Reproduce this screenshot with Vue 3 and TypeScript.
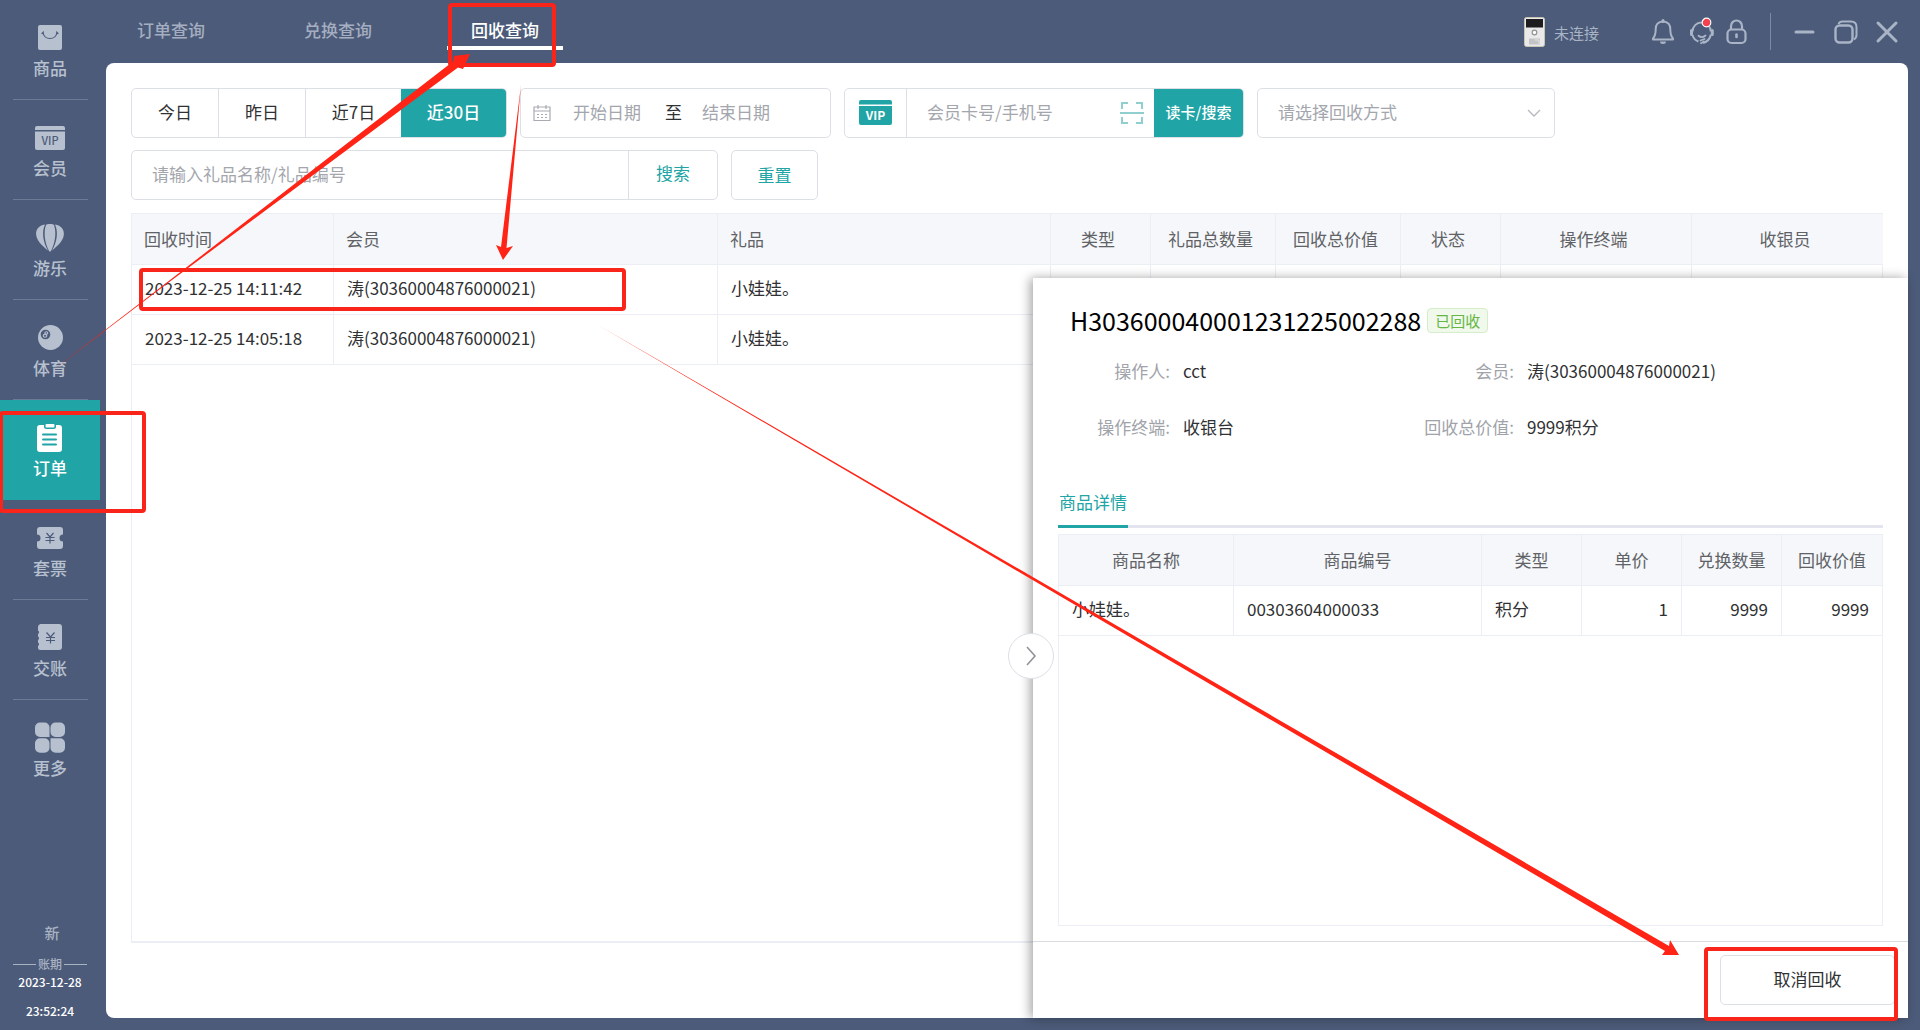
<script setup lang="ts">
import { ref } from 'vue'

interface NavItem { key: string; label: string }
interface Column { label: string; width: number; align?: 'left' | 'center' }

const navItems: NavItem[] = [
  { key: 'goods', label: '商品' },
  { key: 'member', label: '会员' },
  { key: 'play', label: '游乐' },
  { key: 'sport', label: '体育' },
  { key: 'order', label: '订单' },
  { key: 'ticket', label: '套票' },
  { key: 'account', label: '交账' },
  { key: 'more', label: '更多' },
]
const activeNav = ref('order')

const tabs = ['订单查询', '兑换查询', '回收查询']
const activeTab = ref('回收查询')

const ranges = ['今日', '昨日', '近7日', '近30日']
const activeRange = ref('近30日')

const columns: Column[] = [
  { label: '回收时间', width: 202, align: 'left' },
  { label: '会员', width: 384, align: 'left' },
  { label: '礼品', width: 333, align: 'left' },
  { label: '类型', width: 100 },
  { label: '礼品总数量', width: 125 },
  { label: '回收总价值', width: 125 },
  { label: '状态', width: 100 },
  { label: '操作终端', width: 191 },
  { label: '收银员', width: 191 },
]
const rows = [
  ['2023-12-25 14:11:42', '涛(30360004876000021)', '小娃娃。', '', '', '', '', '', ''],
  ['2023-12-25 14:05:18', '涛(30360004876000021)', '小娃娃。', '', '', '', '', '', ''],
]

const detailColumns: Column[] = [
  { label: '商品名称', width: 175 },
  { label: '商品编号', width: 248 },
  { label: '类型', width: 100 },
  { label: '单价', width: 100 },
  { label: '兑换数量', width: 100 },
  { label: '回收价值', width: 100 },
]
const detailRow = ['小娃娃。', '00303604000033', '积分', '1', '9999', '9999']
</script>

<template>
  <div class="app">
    <aside class="sidebar">
      <nav class="nav">
        <a
          v-for="item in navItems"
          :key="item.key"
          href="#"
          class="nav-item"
          :class="{ active: item.key === activeNav }"
          @click.prevent="activeNav = item.key"
        >
          <svg class="nav-icon" viewBox="0 0 32 32" aria-hidden="true">
            <template v-if="item.key === 'goods'">
              <rect x="4" y="3" width="24" height="25" rx="2" fill="currentColor" />
              <path d="M9 10.500q1 6 7 6t7-6M8 11.500l1.500-1.500M24 11.500l-1.500-1.500" fill="none" stroke="#4c5b79" stroke-width="1.200" stroke-linecap="round" />
            </template>
            <template v-else-if="item.key === 'member'">
              <path d="M1 6a2 2 0 0 1 2-2h26a2 2 0 0 1 2 2v2H1zM1 9.500h30V26a2 2 0 0 1-2 2H3a2 2 0 0 1-2-2z" fill="currentColor" />
              <text x="16" y="22.500" text-anchor="middle" font-size="11" font-weight="500" fill="#4c5b79">VIP</text>
            </template>
            <template v-else-if="item.key === 'play'">
              <path d="M11 2.500C4.500 3.500 1.500 8 2.200 13 3 19 8 23.500 14 28.500 9 20 7.500 10 11 2.500zM21 2.500c6.500 1 9.500 5.500 8.800 10.500C29 19 24 23.500 18 28.500 23 20 24.500 10 21 2.500zM16 2c-2 0-3.500.2-4 1-2.500 7-1.500 17 3 26q1 1.200 2 0c4.500-9 5.500-19 3-26-.5-.8-2-1-4-1z" fill="currentColor" />
            </template>
            <template v-else-if="item.key === 'sport'">
              <circle cx="16.500" cy="15.500" r="12.500" fill="currentColor" />
              <circle cx="11.500" cy="12.500" r="4.800" fill="#4c5b79" />
              <ellipse cx="12.300" cy="10.900" rx="1.500" ry="1.200" fill="none" stroke="#b7c0cf" stroke-width="1.100" />
              <ellipse cx="11" cy="13.800" rx="1.800" ry="1.400" fill="none" stroke="#b7c0cf" stroke-width="1.100" />
            </template>
            <template v-else-if="item.key === 'order'">
              <path d="M6 3h4v1.500Q10 7 12.500 7h7Q22 7 22 4.500V3h3a3 3 0 0 1 3 3v21a3 3 0 0 1-3 3H6a3 3 0 0 1-3-3V6a3 3 0 0 1 3-3z" fill="currentColor" />
              <rect x="11.500" y="2" width="9" height="3.500" rx="1" fill="currentColor" />
              <path d="M9 12.500h13M9 17.500h13M9 22.500h13" stroke="#20a4a5" stroke-width="2" stroke-linecap="round" />
            </template>
            <template v-else-if="item.key === 'ticket'">
              <path d="M6 5h20a3 3 0 0 1 3 3v4.500a3.500 3.500 0 0 0 0 7V24a3 3 0 0 1-3 3H6a3 3 0 0 1-3-3v-4.500a3.500 3.500 0 0 0 0-7V8a3 3 0 0 1 3-3z" fill="currentColor" />
              <path d="M12.500 11l3.500 4 3.500-4M11.500 15.500h9M11.500 18.500h9M16 15v6.500" fill="none" stroke="#4c5b79" stroke-width="1.200" />
            </template>
            <template v-else-if="item.key === 'account'">
              <path d="M6.500 2H25a3 3 0 0 1 3 3v20a3 3 0 0 1-3 3H6.500A2.500 2.500 0 0 1 4 25.500V24a2 2 0 0 0 0-3.500V18a2 2 0 0 0 0-3.500V12a2 2 0 0 0 0-3.500V5a3 3 0 0 1 2.500-3z" fill="currentColor" />
              <path d="M12.500 10.500l4 4.500 4-4.500M12 15.500h9M12 18.500h9M16.500 15v6.500" fill="none" stroke="#4c5b79" stroke-width="1.200" />
            </template>
            <template v-else>
              <path d="M6 .5h4.500a5 5 0 0 1 5 5V15H6a5 5 0 0 1-5-5V5.500a5 5 0 0 1 5-5z" fill="currentColor" />
              <path d="M21.500.5H26a5 5 0 0 1 5 5V10a5 5 0 0 1-5 5h-4.500a5 5 0 0 1-5-5V5.500a5 5 0 0 1 5-5z" fill="currentColor" />
              <path d="M6 16.200h4.500a5 5 0 0 1 5 5v4.500a5 5 0 0 1-5 5H6a5 5 0 0 1-5-5v-4.500a5 5 0 0 1 5-5z" fill="currentColor" />
              <path d="M16.500 16.200H26a5 5 0 0 1 5 5v4.500a5 5 0 0 1-5 5h-4.500a5 5 0 0 1-5-5z" fill="currentColor" />
            </template>
          </svg>
          <span>{{ item.label }}</span>
        </a>
      </nav>
      <div class="period">
        <span class="shift">新</span>
        <div class="period-title">账期</div>
        <time>2023-12-28</time>
        <time class="clock">23:52:24</time>
      </div>
    </aside>

    <main class="main">
      <header class="topbar">
        <div class="tabs">
          <button
            v-for="tab in tabs"
            :key="tab"
            type="button"
            class="tab"
            :class="{ active: tab === activeTab }"
            @click="activeTab = tab"
          >{{ tab }}</button>
        </div>
        <div class="tools">
          <svg class="device" width="22" height="30" viewBox="0 0 22 30" aria-hidden="true">
            <rect x="0.500" y="0.500" width="20" height="29" rx="2" fill="#e9e9ea" stroke="#c9c3b4" />
            <rect x="2" y="2" width="17" height="8.500" fill="#1d1d1f" />
            <circle cx="10.500" cy="15.500" r="2.300" fill="#fff" stroke="#929292" stroke-width="1.200" />
            <rect x="5" y="21.500" width="11" height="6" fill="#c4c4c6" />
            <path d="M11 23h4v4" fill="none" stroke="#e4e4e4" />
          </svg>
          <span class="device-state">未连接</span>
          <button type="button" class="tool" aria-label="通知">
            <svg width="24" height="28" viewBox="0 0 24 28">
              <path d="M12 3.500c-5 0-7.300 3.500-7.300 7.500 0 5-.7 7.500-2.700 9.500v1h20v-1c-2-2-2.700-4.500-2.700-9.500 0-4-2.300-7.500-7.300-7.500z" fill="none" stroke="currentColor" stroke-width="2" stroke-linejoin="round" />
              <path d="M12 2.500v1" stroke="currentColor" stroke-width="3" stroke-linecap="round" />
              <path d="M9 23.500h6q0 2.500-3 2.500t-3-2.500z" fill="currentColor" />
            </svg>
          </button>
          <button type="button" class="tool" aria-label="客服">
            <svg width="28" height="30" viewBox="0 0 28 30">
              <path d="M4.500 14.500C4.500 9.500 8.500 5.500 13.500 5.500c5.300 0 9.300 4 9.300 9M22.800 17.500c-.6 4-3 7-7.800 8.500" fill="none" stroke="currentColor" stroke-width="2" />
              <path d="M3.500 13.500v4M24.300 13.500v4" stroke="currentColor" stroke-width="3" stroke-linecap="round" />
              <path d="M4.500 18c1 3.500 3 5.500 6 6.500" fill="none" stroke="currentColor" stroke-width="2" />
              <path d="M10.500 18.800q3.500 2.800 7-.3M12.500 23.500l4-1.500M13 26.300l3-1.800" fill="none" stroke="currentColor" stroke-width="1.800" stroke-linecap="round" />
              <circle cx="18.500" cy="5.500" r="4.300" fill="#f5414f" stroke="#fff" stroke-width="1.200" />
            </svg>
          </button>
          <button type="button" class="tool" aria-label="锁屏">
            <svg width="24" height="28" viewBox="0 0 24 28">
              <rect x="2.500" y="11.500" width="18" height="13.500" rx="4" fill="none" stroke="currentColor" stroke-width="2.200" />
              <path d="M6 11V8a5.500 5.500 0 0 1 11 0v3" fill="none" stroke="currentColor" stroke-width="2.200" />
              <path d="M11.500 16.500v2.500" stroke="currentColor" stroke-width="2.600" stroke-linecap="round" />
            </svg>
          </button>
          <span class="tool-divider"></span>
          <button type="button" class="win" aria-label="最小化">
            <svg width="24" height="24" viewBox="0 0 24 24"><path d="M3 12h17" stroke="currentColor" stroke-width="3" stroke-linecap="round" /></svg>
          </button>
          <button type="button" class="win" aria-label="还原">
            <svg width="24" height="24" viewBox="0 0 24 24">
              <rect x="1.500" y="5.500" width="17" height="17" rx="4" fill="none" stroke="currentColor" stroke-width="2.400" />
              <path d="M4.500 4q1-2.600 4-2.600H17q5.500 0 5.500 5.500V15q0 3-2.500 4.500" fill="none" stroke="currentColor" stroke-width="2" />
            </svg>
          </button>
          <button type="button" class="win" aria-label="关闭">
            <svg width="24" height="24" viewBox="0 0 24 24"><path d="M3 3l18 18M21 3L3 21" stroke="currentColor" stroke-width="3" stroke-linecap="round" /></svg>
          </button>
        </div>
      </header>

      <section class="panel">
        <form class="filters" @submit.prevent>
          <div class="segment">
            <button
              v-for="range in ranges"
              :key="range"
              type="button"
              :class="{ active: range === activeRange }"
              @click="activeRange = range"
            >{{ range }}</button>
          </div>

          <div class="box date-box">
            <svg width="18" height="18" viewBox="0 0 18 18" aria-hidden="true">
              <path d="M1 3h16v13.500H1zM1 7h16M5 1v4M13 1v4" fill="none" stroke="#a8abb2" stroke-width="1.200" />
              <path d="M4 10.500h10M4 13.500h10" stroke="#a8abb2" stroke-width="1.200" stroke-dasharray="2 2" />
            </svg>
            <input type="text" placeholder="开始日期" aria-label="开始日期" />
            <span>至</span>
            <input type="text" placeholder="结束日期" aria-label="结束日期" />
          </div>

          <div class="box vip-box">
            <span class="vip-mark">
              <svg width="34" height="28" viewBox="0 0 34 28" aria-hidden="true">
                <path d="M0 3a2 2 0 0 1 2-2h29a2 2 0 0 1 2 2v2.500H0zM0 7h33v17a2 2 0 0 1-2 2H2a2 2 0 0 1-2-2z" fill="#20a4a5" />
                <text x="16.500" y="20.500" text-anchor="middle" font-size="12" font-weight="700" fill="#fff">VIP</text>
              </svg>
            </span>
            <input type="text" placeholder="会员卡号/手机号" aria-label="会员卡号/手机号" />
            <svg class="scan" width="24" height="24" viewBox="0 0 24 24" aria-hidden="true">
              <path d="M2 8V2h6M16 2h6v6M22 16v6h-6M8 22H2v-6M0 12h24" fill="none" stroke="#8fcfd0" stroke-width="2" />
            </svg>
            <button type="button" class="read-btn">读卡/搜索</button>
          </div>

          <div class="box select-box">
            <select aria-label="回收方式">
              <option>请选择回收方式</option>
            </select>
            <svg width="14" height="8" viewBox="0 0 14 8" aria-hidden="true">
              <path d="M1 1l6 6 6-6" fill="none" stroke="#b4b7bd" stroke-width="1.300" />
            </svg>
          </div>

          <div class="box gift-box">
            <input type="text" placeholder="请输入礼品名称/礼品编号" aria-label="礼品名称/礼品编号" />
            <button type="button" class="search-btn">搜索</button>
          </div>
          <button type="button" class="box reset-btn">重置</button>
        </form>

        <div class="table-wrap">
          <table class="grid records">
            <colgroup>
              <col v-for="c in columns" :key="c.label" :style="{ width: c.width + 'px' }" />
            </colgroup>
            <thead>
              <tr>
                <th v-for="c in columns" :key="c.label" :class="{ left: c.align === 'left' }">{{ c.label }}</th>
              </tr>
            </thead>
            <tbody>
              <tr v-for="(row, r) in rows" :key="r">
                <td v-for="(cell, i) in row" :key="i">{{ cell }}</td>
              </tr>
            </tbody>
          </table>
        </div>

        <aside class="drawer">
          <button type="button" class="collapse" aria-label="收起">
            <svg width="12" height="20" viewBox="0 0 12 20"><path d="M2 1l8 9-8 9" fill="none" stroke="#909399" stroke-width="1.600" /></svg>
          </button>
          <div class="drawer-body">
            <h2>H303600040001231225002288<span class="tag">已回收</span></h2>
            <dl class="info">
              <div><dt>操作人:</dt><dd>cct</dd></div>
              <div><dt>会员:</dt><dd>涛(30360004876000021)</dd></div>
              <div><dt>操作终端:</dt><dd>收银台</dd></div>
              <div><dt>回收总价值:</dt><dd>9999积分</dd></div>
            </dl>
            <div class="detail-tabs"><button type="button">商品详情</button></div>
            <div class="detail-wrap">
              <table class="grid">
                <colgroup>
                  <col v-for="c in detailColumns" :key="c.label" :style="{ width: c.width + 'px' }" />
                </colgroup>
                <thead>
                  <tr><th v-for="c in detailColumns" :key="c.label">{{ c.label }}</th></tr>
                </thead>
                <tbody>
                  <tr>
                    <td v-for="(cell, i) in detailRow" :key="i" :class="{ num: i > 2 }">{{ cell }}</td>
                  </tr>
                </tbody>
              </table>
            </div>
          </div>
          <footer class="drawer-foot">
            <button type="button">取消回收</button>
          </footer>
        </aside>
      </section>
    </main>

    <svg class="marks" width="1920" height="1030" viewBox="0 0 1920 1030" aria-hidden="true">
      <g fill="none" stroke="#f9251a" stroke-width="4">
        <rect x="450" y="5" width="104" height="60" rx="2" />
        <rect x="1" y="413" width="143" height="98" rx="2" />
        <rect x="141" y="270" width="483" height="39" rx="2" />
        <rect x="1706" y="949" width="190" height="70" rx="2" />
      </g>
      <g fill="#ff2416">
        <path d="M48 374L170 280 453 61.500 454 56 470 54 463 69 458 67.500 172 280z" />
        <path d="M521 85L501 247 496 245 503 260 513 246 506.500 248z" />
        <path d="M598 325L1669 946 1670 940 1679 955 1662 955 1665 951z" />
      </g>
    </svg>
  </div>
</template>

<style>
body {
  margin: 0;
  background: #4c5b79;
}
</style>

<style scoped>
* {
  box-sizing: border-box;
}
.app {
  position: relative;
  display: flex;
  min-height: 100vh;
  overflow: hidden;
  background: #4c5b79;
  color: #303133;
  font-family: "Noto Sans CJK SC", sans-serif;
  font-size: 17px;
  line-height: 26px;
}
button,
input,
select {
  font: inherit;
  color: inherit;
  margin: 0;
  padding: 0;
  border: 0;
  background: none;
  outline: none;
  border-radius: 0;
}
input::placeholder {
  color: #a3a6ad;
  opacity: 1;
}

/* sidebar */
.sidebar {
  flex: none;
  display: flex;
  flex-direction: column;
  justify-content: space-between;
  width: 106px;
}
.nav {
  width: 100px;
}
.nav-item {
  display: flex;
  flex-direction: column;
  align-items: center;
  gap: 1px;
  height: 100px;
  padding-top: 22px;
  color: #b7c0cf;
  font-weight: 500;
  text-decoration: none;
  background: linear-gradient(#6c7a96, #6c7a96) 13px 99px / 75px 1px no-repeat;
}
.nav-item:last-child {
  background: none;
}
.nav-item.active {
  background: #20a4a5;
  color: #fff;
}
.nav-icon {
  width: 32px;
  height: 32px;
}
.period {
  display: flex;
  flex-direction: column;
  align-items: center;
  width: 100px;
  padding-bottom: 9px;
  font-size: 12px;
  font-weight: 500;
  line-height: 20px;
  color: #fff;
}
.shift {
  margin-bottom: 13px;
  padding-left: 4px;
  color: #a9b2c3;
  font-size: 15px;
}
.period-title {
  display: flex;
  align-items: center;
  gap: 2px;
  height: 16px;
  color: #a9b2c3;
}
.period-title::before,
.period-title::after {
  content: "";
  width: 23px;
  height: 1px;
  background: #a9b2c3;
}
.clock {
  margin-top: 9px;
}

/* top bar */
.main {
  flex: 1;
  display: flex;
  flex-direction: column;
  min-width: 0;
  padding: 0 12px 12px 0;
}
.topbar {
  display: flex;
  justify-content: space-between;
  height: 63px;
}
.tabs {
  display: flex;
  gap: 51px;
  padding-left: 7px;
}
.tab {
  width: 116px;
  height: 50px;
  padding-top: 13px;
  border-bottom: 4px solid transparent;
  color: #a4aec0;
  font-weight: 500;
}
.tab.active {
  border-color: #fff;
  color: #fff;
}
.tools {
  display: flex;
  align-items: center;
  height: 63px;
  padding-right: 9px;
  color: #a9b4c6;
}
.device-state {
  margin: 3px 52px 0 8px;
  font-size: 15px;
}
.tool {
  display: flex;
  width: 37px;
}
.tool svg,
.win svg {
  display: block;
}
.tool-divider {
  width: 1px;
  height: 37px;
  margin: 0 22px 0 8px;
  background: #7d8aa3;
}
.win {
  width: 24px;
  margin-right: 17px;
}
.win:last-child {
  margin-right: 0;
}

/* panel and filters */
.panel {
  position: relative;
  flex: 1;
  display: flex;
  flex-direction: column;
  padding: 25px 25px 75px;
  background: #fff;
  border-radius: 8px;
}
.filters {
  display: flex;
  flex-wrap: wrap;
  gap: 12px 13px;
  margin-bottom: 13px;
}
.box,
.segment {
  display: flex;
  align-items: center;
  height: 50px;
  border: 1px solid #dcdfe6;
  border-radius: 5px;
}
.box input,
.box select,
.date-box span,
.segment button,
.drawer-foot button {
  padding-bottom: 2px;
}
.segment {
  width: 376px;
  overflow: hidden;
}
.segment button {
  flex: 0 0 87px;
  height: 50px;
  border-right: 1px solid #dcdfe6;
}
.segment button:nth-child(3) {
  flex-basis: 95px;
  border-right: 0;
}
.segment button:nth-child(4) {
  flex: 1;
  border-right: 0;
}
.segment .active {
  background: #20a4a5;
  color: #fff;
  font-weight: 500;
}
.date-box {
  width: 311px;
  padding-left: 12px;
}
.date-box input {
  width: 70px;
}
.date-box svg {
  margin-right: 22px;
}
.date-box span {
  margin: 0 20px 0 22px;
}
.vip-box {
  width: 400px;
  overflow: hidden;
}
.vip-mark {
  display: flex;
  align-items: center;
  justify-content: center;
  width: 62px;
  height: 50px;
  border-right: 1px solid #dcdfe6;
}
.vip-box input {
  flex: 1;
  min-width: 0;
  padding-left: 20px;
}
.scan {
  margin-right: 10px;
}
.read-btn {
  width: 89px;
  height: 50px;
  padding-bottom: 2px;
  background: #20a4a5;
  color: #fff;
  font-size: 15px;
  font-weight: 500;
}
.select-box {
  width: 298px;
  position: relative;
}
.select-box select {
  width: 100%;
  height: 48px;
  padding-left: 20px;
  appearance: none;
  color: #a3a6ad;
}
.select-box svg {
  position: absolute;
  right: 13px;
  top: 20px;
  pointer-events: none;
}
.gift-box {
  width: 587px;
}
.gift-box input {
  flex: 1;
  padding-left: 20px;
}
.search-btn {
  width: 89px;
  height: 48px;
  padding-bottom: 5px;
  border-left: 1px solid #dcdfe6;
  color: #20a4a5;
}
.reset-btn {
  width: 87px;
  justify-content: center;
  border: 1px solid #dcdfe6;
  color: #20a4a5;
}

/* tables */
.table-wrap {
  flex: 1;
  border: 1px solid #ebeef5;
  border-bottom-width: 2px;
}
.grid {
  width: 100%;
  table-layout: fixed;
  border-collapse: separate;
  border-spacing: 0;
}
.grid th,
.grid td {
  height: 50px;
  padding: 0 13px 3px;
  border-right: 1px solid #ebeef5;
  border-bottom: 1px solid #ebeef5;
  font-weight: 400;
  text-align: left;
  white-space: nowrap;
}
.grid th {
  height: 51px;
  padding: 0;
  background: #f5f7fa;
  color: #606266;
  text-align: center;
}
.records th {
  padding-right: 5px;
}
.grid th.left {
  padding-left: 12px;
  text-align: left;
}
.grid th:last-child,
.grid td:last-child {
  border-right: 0;
}
.grid .num {
  text-align: right;
}

/* detail drawer */
.drawer {
  position: absolute;
  top: 215px;
  right: 0;
  bottom: 0;
  display: flex;
  flex-direction: column;
  width: 875px;
  background: #fff;
  box-shadow: -3px 0 10px rgba(0, 0, 0, 0.35);
}
.collapse {
  position: absolute;
  left: -25px;
  top: 355px;
  display: flex;
  align-items: center;
  justify-content: center;
  width: 46px;
  height: 46px;
  border: 1px solid #dcdfe6;
  border-radius: 50%;
  background: #fff;
}
.drawer-body {
  flex: 1;
  display: flex;
  flex-direction: column;
  padding: 24px 25px 15px;
}
h2 {
  display: flex;
  align-items: center;
  gap: 6px;
  margin: 0 0 19px;
  padding-left: 12px;
  color: #000;
  font-size: 25px;
  font-weight: 400;
  line-height: 37px;
}
.tag {
  height: 25px;
  padding: 0 7px;
  border: 1px solid #d5edc8;
  border-radius: 4px;
  background: #f0f9eb;
  color: #67b645;
  font-size: 15px;
  line-height: 23px;
}
.info {
  display: grid;
  grid-template-columns: 344px 1fr;
  row-gap: 30px;
  margin: 0;
}
.info div {
  display: flex;
  gap: 13px;
}
.info dt {
  width: 112px;
  color: #a0a3a9;
  text-align: right;
}
.info dd {
  margin: 0;
}
.detail-tabs {
  display: flex;
  height: 53px;
  margin: 35px 0 6px;
  border-bottom: 3px solid #e4e4ee;
}
.detail-tabs button {
  width: 70px;
  height: 53px;
  padding-top: 3px;
  border-bottom: 3px solid #20a4a5;
  color: #20a4a5;
  white-space: nowrap;
}
.detail-wrap {
  flex: 1;
  border: 1px solid #ebeef5;
}
.drawer-foot {
  display: flex;
  justify-content: flex-end;
  height: 77px;
  padding: 13px 13px 0 0;
  border-top: 1px solid #d9dbe0;
}
.drawer-foot button {
  width: 175px;
  height: 50px;
  border: 1px solid #dcdfe6;
  border-radius: 5px;
}

/* annotation layer */
.marks {
  position: absolute;
  left: 0;
  top: 0;
  pointer-events: none;
}
</style>
